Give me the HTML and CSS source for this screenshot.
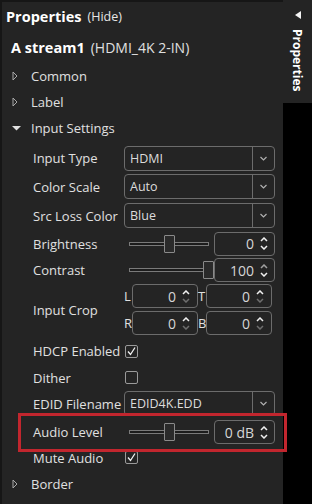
FILE: index.html
```html
<!DOCTYPE html>
<html lang="en">
<head>
    <meta charset="UTF-8">
    <title>Properties</title>
    <link rel="stylesheet" href="styles.css">
</head>
<body>

    <div class="panel">
        <div class="title"><span class="title-main">Properties</span><span class="title-hide">(Hide)</span></div>
        <div class="device"><b>A stream1</b><span>(HDMI_4K 2-IN)</span></div>

        <div class="node"><span class="tri"><svg width="6" height="10" viewBox="0 0 6 10"><path d="M1 1 L5 5 L1 9 Z" fill="none" stroke="#a8a8a8" stroke-width="1"/></svg></span>Common</div>
        <div class="node"><span class="tri"><svg width="6" height="10" viewBox="0 0 6 10"><path d="M1 1 L5 5 L1 9 Z" fill="none" stroke="#a8a8a8" stroke-width="1"/></svg></span>Label</div>
        <div class="node"><span class="tri"><svg width="9" height="6" viewBox="0 0 9 6"><path d="M0 1 L9 1 L4.5 5.5 Z" fill="#e0e0e0"/></svg></span>Input Settings</div>

        <div class="form">
            <div class="row h28">
                <span class="lbl">Input Type</span>
                <div class="select">HDMI<span class="sel-btn"><svg width="7" height="5" viewBox="0 0 7 5"><path d="M0.5 1 L3.5 4 L6.5 1" fill="none" stroke="#b0b0b0" stroke-width="1.2"/></svg></span></div>
            </div>
            <div class="row h29">
                <span class="lbl">Color Scale</span>
                <div class="select">Auto<span class="sel-btn"><svg width="7" height="5" viewBox="0 0 7 5"><path d="M0.5 1 L3.5 4 L6.5 1" fill="none" stroke="#b0b0b0" stroke-width="1.2"/></svg></span></div>
            </div>
            <div class="row h29">
                <span class="lbl">Src Loss Color</span>
                <div class="select">Blue<span class="sel-btn"><svg width="7" height="5" viewBox="0 0 7 5"><path d="M0.5 1 L3.5 4 L6.5 1" fill="none" stroke="#b0b0b0" stroke-width="1.2"/></svg></span></div>
            </div>
            <div class="row h27">
                <span class="lbl">Brightness</span>
                <div class="slider"><div class="track"><span class="thumb" style="left:34px"></span></div></div>
                <div class="num">0<span class="spin"><svg width="8" height="5" viewBox="0 0 8 5"><path d="M1 4 L4 1 L7 4" fill="none" stroke="#f0f0f0" stroke-width="1.5"/></svg><svg width="8" height="5" viewBox="0 0 8 5"><path d="M1 1 L4 4 L7 1" fill="none" stroke="#f0f0f0" stroke-width="1.5"/></svg></span></div>
            </div>
            <div class="row h26">
                <span class="lbl">Contrast</span>
                <div class="slider"><div class="track"><span class="thumb" style="left:73px"></span></div></div>
                <div class="num">100<span class="spin"><svg width="8" height="5" viewBox="0 0 8 5"><path d="M1 4 L4 1 L7 4" fill="none" stroke="#a0a0a0" stroke-width="1.5"/></svg><svg width="8" height="5" viewBox="0 0 8 5"><path d="M1 1 L4 4 L7 1" fill="none" stroke="#f0f0f0" stroke-width="1.5"/></svg></span></div>
            </div>
            <div class="row crop-row">
                <span class="lbl">Input Crop</span>
                <div class="crop">
                    <div class="crop-line">
                        <span class="side-lbl">L</span>
                        <div class="num small">0<span class="spin"><svg width="8" height="5" viewBox="0 0 8 5"><path d="M1 4 L4 1 L7 4" fill="none" stroke="#f0f0f0" stroke-width="1.5"/></svg><svg width="8" height="5" viewBox="0 0 8 5"><path d="M1 1 L4 4 L7 1" fill="none" stroke="#6e6e6e" stroke-width="1.5"/></svg></span></div>
                        <span class="side-lbl">T</span>
                        <div class="num small">0<span class="spin"><svg width="8" height="5" viewBox="0 0 8 5"><path d="M1 4 L4 1 L7 4" fill="none" stroke="#f0f0f0" stroke-width="1.5"/></svg><svg width="8" height="5" viewBox="0 0 8 5"><path d="M1 1 L4 4 L7 1" fill="none" stroke="#6e6e6e" stroke-width="1.5"/></svg></span></div>
                    </div>
                    <div class="crop-line">
                        <span class="side-lbl">R</span>
                        <div class="num small">0<span class="spin"><svg width="8" height="5" viewBox="0 0 8 5"><path d="M1 4 L4 1 L7 4" fill="none" stroke="#f0f0f0" stroke-width="1.5"/></svg><svg width="8" height="5" viewBox="0 0 8 5"><path d="M1 1 L4 4 L7 1" fill="none" stroke="#6e6e6e" stroke-width="1.5"/></svg></span></div>
                        <span class="side-lbl">B</span>
                        <div class="num small">0<span class="spin"><svg width="8" height="5" viewBox="0 0 8 5"><path d="M1 4 L4 1 L7 4" fill="none" stroke="#f0f0f0" stroke-width="1.5"/></svg><svg width="8" height="5" viewBox="0 0 8 5"><path d="M1 1 L4 4 L7 1" fill="none" stroke="#6e6e6e" stroke-width="1.5"/></svg></span></div>
                    </div>
                </div>
            </div>
            <div class="row h30">
                <span class="lbl">HDCP Enabled</span>
                <span class="check"><svg width="11" height="11" viewBox="0 0 11 11"><path d="M2 5.5 L4.5 8.5 L9 1.5" fill="none" stroke="#f2f2f2" stroke-width="1.3"/></svg></span>
            </div>
            <div class="row h23">
                <span class="lbl">Dither</span>
                <span class="check"></span>
            </div>
            <div class="row h29">
                <span class="lbl">EDID Filename</span>
                <div class="select">EDID4K.EDD<span class="sel-btn"><svg width="7" height="5" viewBox="0 0 7 5"><path d="M0.5 1 L3.5 4 L6.5 1" fill="none" stroke="#b0b0b0" stroke-width="1.2"/></svg></span></div>
            </div>
            <div class="row h28">
                <span class="lbl">Audio Level</span>
                <div class="slider"><div class="track"><span class="thumb" style="left:34px"></span></div></div>
                <div class="num">0 dB<span class="spin"><svg width="8" height="5" viewBox="0 0 8 5"><path d="M1 4 L4 1 L7 4" fill="none" stroke="#f0f0f0" stroke-width="1.5"/></svg><svg width="8" height="5" viewBox="0 0 8 5"><path d="M1 1 L4 4 L7 1" fill="none" stroke="#f0f0f0" stroke-width="1.5"/></svg></span></div>
            </div>
            <div class="row h23">
                <span class="lbl">Mute Audio</span>
                <span class="check"><svg width="11" height="11" viewBox="0 0 11 11"><path d="M2 5.5 L4.5 8.5 L9 1.5" fill="none" stroke="#f2f2f2" stroke-width="1.3"/></svg></span>
            </div>
        </div>

        <div class="node border-node"><span class="tri"><svg width="6" height="10" viewBox="0 0 6 10"><path d="M1 1 L5 5 L1 9 Z" fill="none" stroke="#a8a8a8" stroke-width="1"/></svg></span>Border</div>
    </div>

    <div class="side">
        <div class="tab">
            <svg width="6" height="8" viewBox="0 0 6 8"><path d="M6 0 L0 4 L6 8 Z" fill="#f4f4f4"/></svg>
            <span class="tab-text">Properties</span>
        </div>
    </div>

    <div class="highlight"></div>

</body>
</html>
```

FILE: styles.css
```css
body {
    margin: 0;
    width: 312px;
    height: 504px;
    display: flex;
    position: relative;
    overflow: hidden;
    background: #000;
    font-family: "Open Sans", sans-serif;
    font-size: 13px;
    color: #e0e0e0;
}

.panel {
    width: 281px;
    height: 502px;
    border-left: 2px solid #161616;
    border-top: 2px solid #161616;
    background: #242424;
}

.title {
    height: 29px;
    display: flex;
    align-items: center;
    gap: 6px;
    padding-left: 4px;
}

.title-main {
    font-size: 14.5px;
    font-weight: 700;
    color: #fff;
}

.title-hide {
    font-size: 12.5px;
    color: #e6e6e6;
}

.device {
    height: 32px;
    display: flex;
    align-items: center;
    gap: 6px;
    padding-left: 9px;
    font-size: 14px;
}

.device b {
    color: #fff;
    font-size: 14.5px;
}

.node {
    height: 26px;
    display: flex;
    align-items: center;
    padding-left: 10px;
}

.tri {
    width: 19px;
    display: flex;
    align-items: center;
}

.border-node {
    height: 30px;
}

.form {
    margin-top: 3px;
}

.row {
    display: flex;
    align-items: center;
    padding-left: 31px;
}

.h23 { height: 23px; }
.h26 { height: 26px; }
.h27 { height: 27px; }
.h28 { height: 28px; }
.h29 { height: 29px; }
.h30 { height: 30px; }

.lbl {
    width: 91px;
    flex: none;
    white-space: nowrap;
}

.select {
    width: 151px;
    height: 25px;
    box-sizing: border-box;
    border: 1px solid #6c6c6c;
    border-radius: 4px;
    display: flex;
    align-items: center;
    padding-left: 5px;
    font-size: 12.5px;
    color: #dcdcdc;
}

.sel-btn {
    margin-left: auto;
    width: 21px;
    height: 100%;
    border-left: 1px solid #6c6c6c;
    display: flex;
    align-items: center;
    justify-content: center;
}

.slider {
    width: 90px;
    padding-left: 5px;
    box-sizing: border-box;
}

.track {
    position: relative;
    width: 80px;
    height: 4px;
    box-sizing: border-box;
    border: 1px solid #7a7a7a;
    background: #1c1c1c;
}

.thumb {
    position: absolute;
    top: -8px;
    width: 11px;
    height: 18px;
    box-sizing: border-box;
    border: 1px solid #8a8a8a;
    border-radius: 1px;
    background: #2a2a2a;
}

.num {
    width: 61px;
    height: 24px;
    box-sizing: border-box;
    border: 1px solid #6c6c6c;
    border-radius: 4px;
    display: flex;
    align-items: center;
    justify-content: flex-end;
    padding-right: 6px;
    font-size: 14px;
    color: #d6d6d6;
}

.num.small {
    width: 66px;
    padding-right: 7px;
}

.spin {
    display: flex;
    flex-direction: column;
    gap: 3px;
    margin-left: 6px;
}

.spin svg {
    display: block;
}

.crop-row {
    height: 53px;
}

.crop {
    display: flex;
    flex-direction: column;
    gap: 3px;
}

.crop-line {
    display: flex;
    align-items: center;
}

.side-lbl {
    width: 8px;
    font-size: 13px;
}

.check {
    width: 13px;
    height: 13px;
    box-sizing: border-box;
    border: 1px solid #9a9a9a;
    border-radius: 2px;
    display: flex;
    align-items: center;
    justify-content: center;
    margin-left: 1px;
}

.side {
    width: 29px;
    display: flex;
    flex-direction: column;
}

.tab {
    height: 103px;
    background: #242424;
    display: flex;
    flex-direction: column;
    align-items: center;
    padding-top: 11px;
    box-sizing: border-box;
    gap: 10px;
}

.tab-text {
    writing-mode: vertical-rl;
    font-size: 12px;
    font-weight: 700;
    color: #fff;
}

.highlight {
    position: absolute;
    left: 18px;
    top: 413px;
    width: 269px;
    height: 39px;
    box-sizing: border-box;
    border: 3.5px solid #c2262e;
}
```
